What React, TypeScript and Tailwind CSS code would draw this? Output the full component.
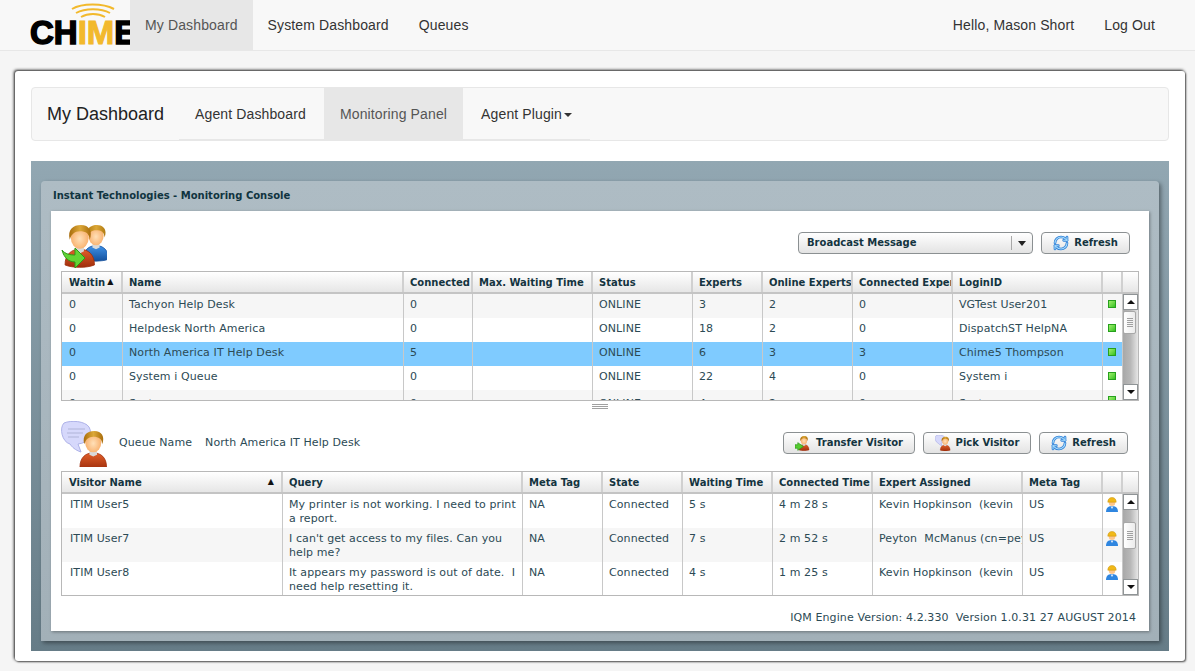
import React, { useId } from "react";

const arial = "font-['Liberation_Sans',Arial,sans-serif]";

function Person({ x, y, s, body, bodyDark, hair }: { x: number; y: number; s: number; body: string; bodyDark: string; hair: string }) {
  const id = useId();
  return (
    <g transform={`translate(${x} ${y}) scale(${s})`}>
      <defs>
        <linearGradient id={`${id}b`} x1="0" y1="0" x2="0" y2="1">
          <stop offset="0" stopColor={body} />
          <stop offset="1" stopColor={bodyDark} />
        </linearGradient>
        <radialGradient id={`${id}s`} cx="0.5" cy="0.55" r="0.6">
          <stop offset="0" stopColor="#ffe0b8" />
          <stop offset="1" stopColor="#f7a860" />
        </radialGradient>
        <linearGradient id={`${id}h`} x1="0" y1="0" x2="1" y2="0">
          <stop offset="0" stopColor={hair} />
          <stop offset="0.5" stopColor="#dca838" />
          <stop offset="1" stopColor={hair} />
        </linearGradient>
      </defs>
      <path d="M1 39C1 29 7 24 15 24C23 24 29 29 29 39C22 42 8 42 1 39Z" fill={`url(#${id}b)`} stroke={bodyDark} strokeWidth="0.8" />
      <path d="M11 21H19V26L15 28L11 26Z" fill="#d9d9d9" />
      <ellipse cx="15" cy="13" rx="8.5" ry="10.5" fill={`url(#${id}s)`} />
      <path d="M5.5 15C3 5 9 1 16 1C24 1 27.5 7 24.5 15C24 9 21 7 15 7C10 7 7 10 5.5 15Z" fill={`url(#${id}h)`} />
    </g>
  );
}

function GroupIcon() {
  return (
    <svg width="46" height="46" viewBox="0 0 46 46" className="block">
      <Person x={21.5} y={0} s={0.9} body="#3f92e8" bodyDark="#14509c" hair="#b07a10" />
      <Person x={3} y={0} s={1.05} body="#e2602a" bodyDark="#a02e0c" hair="#a86c0c" />
      <path d="M1 26C4 30 9 31 14 31V24L24 34L14 44V38C8 38 3 34 1 26Z" fill="#62d434" stroke="#2c9a18" strokeWidth="1" />
    </svg>
  );
}

function BubbleIcon() {
  return (
    <svg width="46" height="46" viewBox="0 0 46 46" className="block">
      <path d="M3 2C10 -1 24 0 28 6C32 13 28 22 17 23L20 31C14 29 11 26 9 23C1 21 -2 7 3 2Z" fill="#d6d8fb" stroke="#aeb2e8" strokeWidth="1" />
      <path d="M7 8H24M6 12H22M7 16H18" stroke="#b0b4d8" strokeWidth="1" />
      <Person x={18} y={9} s={0.95} body="#e2602a" bodyDark="#a02e0c" hair="#a86c0c" />
    </svg>
  );
}

function Refresh() {
  const paths = ["M3 12a9 9 0 0 1 9-9 9.75 9.75 0 0 1 6.74 2.74L21 8", "M21 3v5h-5", "M21 12a9 9 0 0 1-9 9 9.75 9.75 0 0 1-6.74-2.74L3 16", "M8 16H3v5"];
  return (
    <svg width="16" height="16" viewBox="0 0 24 24" fill="none" strokeLinecap="round" strokeLinejoin="round">
      {paths.map((d) => <path key={d} d={d} stroke="#2f80d8" strokeWidth="4" />)}
      {paths.map((d) => <path key={d + "i"} d={d} stroke="#a8dcfb" strokeWidth="1.6" />)}
    </svg>
  );
}

function SmallTransfer() {
  return (
    <svg width="16" height="16" viewBox="0 0 46 46">
      <Person x={10} y={2} s={1.05} body="#e2602a" bodyDark="#a02e0c" hair="#a86c0c" />
      <path d="M8 22L24 33 8 44V38H0V28H8Z" fill="#55cc30" stroke="#2c9a18" strokeWidth="2" />
    </svg>
  );
}

function SmallPick() {
  return (
    <svg width="16" height="16" viewBox="0 0 46 46">
      <path d="M3 2C10 -1 24 0 28 6C32 13 28 22 17 23L20 31C14 29 11 26 9 23C1 21 -2 7 3 2Z" fill="#d6d8fb" stroke="#aeb2e8" strokeWidth="2" />
      <Person x={14} y={4} s={1.02} body="#e2602a" bodyDark="#a02e0c" hair="#a86c0c" />
    </svg>
  );
}

function Agent() {
  return (
    <svg width="14" height="15" viewBox="0 0 14 15" className="block">
      <path d="M1 15C1 11 3 9 7 9C11 9 13 11 13 15Z" fill="#2f86e0" />
      <path d="M5.5 9.5L7 12L8.5 9.5Z" fill="#dbeafe" />
      <ellipse cx="7" cy="6" rx="3.2" ry="3" fill="#fdc68c" />
      <path d="M2.8 5.2C2.8 2 4.6 0.5 7 0.5C9.4 0.5 11.2 2 11.2 5.2Z" fill="#f0b818" stroke="#c8920c" strokeWidth="0.5" />
    </svg>
  );
}

function Dot() {
  return <div className="h-[8px] w-[8px] border border-[#27a01e] bg-linear-to-br from-[#9cf06a] to-[#2ec21e]" />;
}

function Btn({ icon, label, width }: { icon: React.ReactNode; label: string; width: string }) {
  return (
    <button className={`flex h-[22px] items-center justify-center gap-[5px] rounded-[4px] border border-[#8b9092] bg-linear-to-b from-white to-[#e3e3e3] text-[10px] font-bold tracking-normal text-[#14343f] ${width}`}>
      {icon}
      <span className="pb-[2px]">{label}</span>
    </button>
  );
}

function Arrow({ up }: { up?: boolean }) {
  return (
    <div className="flex h-[16px] w-[15px] shrink-0 items-center justify-center border border-[#8f9496] bg-white">
      <div className={`h-0 w-0 border-x-[4px] border-x-transparent ${up ? "border-b-[4px] border-b-[#111]" : "border-t-[4px] border-t-[#111]"}`} />
    </div>
  );
}

function Scroll({ top, thumb }: { top: number; thumb: number }) {
  return (
    <div className="flex w-[15px] shrink-0 flex-col">
      <Arrow up />
      <div className="flex-1 bg-linear-to-r from-[#a8a8a8] via-[#b8b8b8] to-[#e6e6e6]">
        <div style={{ marginTop: top, height: thumb }} className="flex w-[13px] flex-col items-center justify-center gap-[1px] rounded-[2px] border border-[#a8a8a8] bg-linear-to-r from-white to-[#ececec]">
          {[0, 1, 2, 3, 4].map((i) => <div key={i} className="h-px w-[6px] bg-[#a0a0a0]" />)}
        </div>
      </div>
      <Arrow />
    </div>
  );
}

const cols1 = [61, 281, 69, 120, 100, 70, 90, 100, 150, 20];
const head1 = ["Waitin", "Name", "Connected", "Max. Waiting Time", "Status", "Experts", "Online Experts", "Connected Experts", "LoginID", ""];
const rows1 = [
  ["0", "Tachyon Help Desk", "0", "", "ONLINE", "3", "2", "0", "VGTest User201"],
  ["0", "Helpdesk North America", "0", "", "ONLINE", "18", "2", "0", "DispatchST HelpNA"],
  ["0", "North America IT Help Desk", "5", "", "ONLINE", "6", "3", "3", "Chime5 Thompson"],
  ["0", "System i Queue", "0", "", "ONLINE", "22", "4", "0", "System i"],
  ["0", "Systems", "0", "", "ONLINE", "4", "2", "0", "System"],
];
const cols2 = [221, 240, 80, 80, 90, 100, 150, 80, 20];
const head2 = ["Visitor Name", "Query", "Meta Tag", "State", "Waiting Time", "Connected Time", "Expert Assigned", "Meta Tag", ""];
const rows2 = [
  ["ITIM User5", "My printer is not working. I need to print a report.", "NA", "Connected", "5 s", "4 m 28 s", "Kevin Hopkinson  (kevin", "US"],
  ["ITIM User7", "I can't get access to my files. Can you help me?", "NA", "Connected", "7 s", "2 m 52 s", "Peyton  McManus (cn=peyton)", "US"],
  ["ITIM User8", "It appears my password is out of date.  I need help resetting it.", "NA", "Connected", "4 s", "1 m 25 s", "Kevin Hopkinson  (kevin", "US"],
];

function Header({ cols, heads, sort }: { cols: number[]; heads: string[]; sort: "tight" | "far" }) {
  return (
    <div className="flex h-[22px] shrink-0 border-b-2 border-[#c4c4c4] bg-linear-to-b from-white to-[#e6e6e6] text-[10px] font-bold tracking-normal text-[#14343f]">
      {cols.map((w, i) => (
        <div key={i} style={{ width: w }} className={`flex shrink-0 items-center overflow-hidden whitespace-nowrap border-r-2 border-[#d0d0d0] ${i === 0 ? "pl-[7px]" : "pl-[6px]"}`}>
          <span className={i === 0 && sort === "far" ? "flex-1" : ""}>{heads[i]}</span>
          {i === 0 && <span className={`text-[8px] text-[#111] ${sort === "far" ? "pr-[7px]" : "pl-[2px]"}`}>▲</span>}
        </div>
      ))}
      <div className="w-[15px] shrink-0" />
    </div>
  );
}

function Table1() {
  return (
    <div className="flex h-[130px] flex-col border border-[#b8b8b8] text-[#2c4a55]">
      <Header cols={cols1} heads={head1} sort="tight" />
      <div className="flex min-h-0 flex-1">
        <div className="min-w-0 flex-1 overflow-hidden">
          {rows1.map((r, ri) => (
            <div key={ri} className={`flex h-[24px] ${ri === 2 ? "bg-[#7fcbff]" : ri === 0 || ri === 4 ? "bg-[#f6f6f6]" : "bg-white"}`}>
              {cols1.map((w, i) => (
                <div key={i} style={{ width: w }} className={`shrink-0 overflow-hidden whitespace-pre border-r border-[#c8c8c8] leading-[14px] ${i === 9 ? "pl-[5px] pt-[6px]" : i === 0 ? "pl-[7px]" : "pl-[6px]"} ${i === 9 ? "" : ri === 4 ? "pt-[7px]" : "pt-[4px]"}`}>
                  {i === 9 ? <Dot /> : r[i]}
                </div>
              ))}
            </div>
          ))}
        </div>
        <Scroll top={1} thumb={23} />
      </div>
    </div>
  );
}

function Table2() {
  return (
    <div className="flex h-[125px] flex-col border border-[#b8b8b8] text-[#2c4a55]">
      <Header cols={cols2} heads={head2} sort="far" />
      <div className="flex min-h-0 flex-1">
        <div className="min-w-0 flex-1 overflow-hidden">
          {rows2.map((r, ri) => (
            <div key={ri} className={`flex h-[34px] ${ri === 1 ? "bg-[#f6f6f6]" : "bg-white"}`}>
              {cols2.map((w, i) => (
                <div key={i} style={{ width: w }} className={`shrink-0 overflow-hidden border-r border-[#c8c8c8] leading-[14px] ${i === 8 ? "pl-[2px] pt-[3px]" : i === 0 ? "pl-[8px] pt-[4px]" : "pl-[6px] pt-[4px]"} ${i === 1 ? "whitespace-pre-wrap pr-[4px]" : "whitespace-pre"}`}>
                  {i === 8 ? <Agent /> : r[i]}
                </div>
              ))}
            </div>
          ))}
        </div>
        <Scroll top={12} thumb={27} />
      </div>
    </div>
  );
}

function Logo() {
  return (
    <div className="relative h-[50px] w-[100px] shrink-0 overflow-hidden">
      <svg width="46" height="18" viewBox="0 0 46 18" className="absolute left-[40px] top-[3px]" fill="none" stroke="#f2b92c">
        <path d="M2 6C12 0 33 0 44 6" strokeWidth="2" />
        <path d="M6 10C15 5 31 5 40 10" strokeWidth="2" />
        <path d="M11 14C18 10 28 10 35 14" strokeWidth="2" />
      </svg>
      <div className={`absolute left-0 top-[14px] whitespace-nowrap text-[33px] font-bold leading-[38px] tracking-[0px] text-black [-webkit-text-stroke:1.5px_#000] ${arial}`}>
        CH<span className="text-[#f2b92c] [-webkit-text-stroke:1px_#f2b92c]">IM</span>E
      </div>
    </div>
  );
}

export default function App() {
  return (
    <div className={`flex h-[671px] w-[1195px] flex-col overflow-hidden bg-[#f5f5f5] ${arial}`}>
      <nav className="flex h-[51px] shrink-0 border-b border-[#e7e7e7] bg-[#f8f8f8] pl-[30px] text-[14px] tracking-[0.13px] text-[#333]">
        <Logo />
        <a className="flex h-[50px] items-center bg-[#e7e7e7] px-[15px] text-[#555]">My Dashboard</a>
        <a className="flex h-[50px] items-center px-[15px]">System Dashboard</a>
        <a className="flex h-[50px] items-center px-[15px]">Queues</a>
        <div className="flex-1" />
        <a className="flex h-[50px] items-center px-[15px]">Hello, Mason Short</a>
        <a className="mr-[25px] flex h-[50px] items-center px-[15px]">Log Out</a>
      </nav>
      <div className="ml-[15px] mt-[20px] flex h-[590px] w-[1170px] flex-col rounded-[3px] bg-white px-[16px] pb-[10px] pt-[16px] shadow-[-1px_-1px_3px_#222,1px_1px_2px_#555]">
        <div className="flex h-[54px] shrink-0 items-stretch rounded-[4px] border border-[#e7e7e7] bg-[#f8f8f8] pl-[15px] text-[14px] text-[#333]">
          <div className="flex w-[132px] items-center text-[18px] text-[#222]">My Dashboard</div>
          <div className="flex h-[53px] border-b-2 border-[#e7e7e7] tracking-[0.13px]">
            <a className="flex items-center pl-[16px] pr-[18px] pt-[2px]">Agent Dashboard</a>
            <a className="flex items-center bg-[#e7e7e7] px-[16px] pt-[2px] text-[#555]">Monitoring Panel</a>
            <a className="flex items-center gap-[2px] pl-[18px] pr-[18px] pt-[2px]">
              Agent Plugin
              <span className="mt-[1px] h-0 w-0 border-x-[4px] border-t-[4px] border-x-transparent border-t-[#333]" />
            </a>
          </div>
        </div>
        <div className="mt-[20px] flex-1 bg-linear-to-b from-[#92a7b2] to-[#667c87] px-[10px] pb-[10px] pt-[20px]">
          <div className="h-[460px] rounded-t-[4px] bg-linear-to-b from-[#aebcc4] to-[#a2b0b8] px-[10px] pb-[10px] font-['DejaVu_Sans',Verdana,sans-serif] text-[11px] tracking-[0.1px] shadow-[2px_2px_4px_rgba(0,0,0,0.4)]">
            <div className="flex h-[30px] items-center pb-[1px] pl-[2px] text-[10px] font-bold tracking-normal text-[#103440]">Instant Technologies - Monitoring Console</div>
            <div className="h-[420px] bg-white px-[10px] shadow-[1px_1px_3px_rgba(0,0,0,0.35)]">
              <div className="flex h-[60px] items-start">
                <div className="pt-[13px]"><GroupIcon /></div>
                <div className="flex-1" />
                <div className="mr-[9px] mt-[21px] flex gap-[8px]">
                  <div className="flex h-[22px] w-[235px] items-center rounded-[4px] border border-[#8b9092] bg-linear-to-b from-white to-[#e3e3e3] pl-[8px] text-[10px] font-bold tracking-normal text-[#14343f]">
                    <span className="flex-1 pb-[2px]">Broadcast Message</span>
                    <span className="h-[14px] w-px bg-[#a8a8a8]" />
                    <span className="mx-[6px] h-0 w-0 border-x-[4px] border-t-[5px] border-x-transparent border-t-[#222]" />
                  </div>
                  <Btn icon={<Refresh />} label="Refresh" width="w-[89px]" />
                </div>
              </div>
              <Table1 />
              <div className="flex h-[10px] flex-col items-center justify-center gap-[1px]">
                <div className="h-px w-[16px] bg-[#a0a0a0]" />
                <div className="h-px w-[16px] bg-[#a0a0a0]" />
                <div className="h-px w-[16px] bg-[#a0a0a0]" />
              </div>
              <div className="flex h-[60px] items-start">
                <div className="pt-[10px]"><BubbleIcon /></div>
                <div className="ml-[12px] mt-[24px] flex gap-[13px] whitespace-pre text-[#2c4a55]">
                  <span>Queue Name</span>
                  <span>North America IT Help Desk</span>
                </div>
                <div className="flex-1" />
                <div className="mr-[11px] mt-[21px] flex gap-[8px]">
                  <Btn icon={<SmallTransfer />} label="Transfer Visitor" width="w-[132px]" />
                  <Btn icon={<SmallPick />} label="Pick Visitor" width="w-[108px]" />
                  <Btn icon={<Refresh />} label="Refresh" width="w-[89px]" />
                </div>
              </div>
              <Table2 />
              <div className="mt-[14px] whitespace-pre pr-[3px] text-right text-[#2c4a55]">IQM Engine Version: 4.2.330  Version 1.0.31 27 AUGUST 2014</div>
            </div>
          </div>
        </div>
      </div>
    </div>
  );
}
